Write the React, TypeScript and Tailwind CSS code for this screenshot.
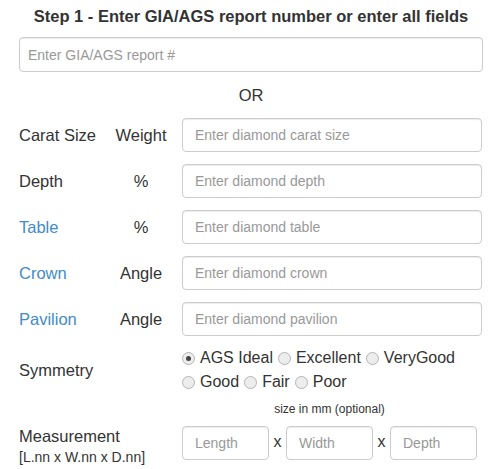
const rows = [
  { label: "Carat Size", unit: "Weight", placeholder: "Enter diamond carat size", link: false },
  { label: "Depth", unit: "%", placeholder: "Enter diamond depth", link: false },
  { label: "Table", unit: "%", placeholder: "Enter diamond table", link: true },
  { label: "Crown", unit: "Angle", placeholder: "Enter diamond crown", link: true },
  { label: "Pavilion", unit: "Angle", placeholder: "Enter diamond pavilion", link: true },
];

const Radio = ({ label, checked }: { label: string; checked?: boolean }) => (
  <label className="flex items-center gap-[5px] mr-[5px]">
    <span className="w-[13px] h-[13px] rounded-full border border-[#b4b4b4] bg-[#ededed] flex items-center justify-center">
      {checked && <span className="w-[5px] h-[5px] rounded-full bg-[#444]" />}
    </span>
    <span>{label}</span>
  </label>
);

const inputCls =
  "h-[34px] rounded-[4px] border border-[#ccc] text-[14px] text-[#555] placeholder:text-[#999] shadow-[inset_0_1px_1px_rgba(0,0,0,0.075)] outline-none";

const App = () => {
  return (
    <div className="w-[503px] h-[469px] bg-white text-[#333] font-['Liberation_Sans',Arial,sans-serif] text-[16.5px] pt-[6px] pl-[19px] pr-[20px]">
      <h1 className="font-bold text-[16.5px] text-center leading-[20px] text-[#333]">
        Step 1 - Enter GIA/AGS report number or enter all fields
      </h1>
      <input className={`${inputCls} w-full h-[35px] mt-[11px] px-[8px]`} placeholder="Enter GIA/AGS report #" />
      <div className="text-center leading-[20px] mt-[13px]">OR</div>

      <div className="flex flex-col gap-[12px] mt-[13px]">
        {rows.map((r) => (
          <div key={r.label} className="flex items-center">
            <span className={`w-[91px] ${r.link ? "text-[#428bca]" : ""}`}>{r.label}</span>
            <span className="w-[62px] text-center">{r.unit}</span>
            <input className={`${inputCls} px-[12px] ml-[10px] flex-1 mr-[1px]`} placeholder={r.placeholder} />
          </div>
        ))}
      </div>

      <div className="flex items-center mt-[10px] text-[16px]">
        <span className="w-[163px] text-[16.5px]">Symmetry</span>
        <div>
          <div className="flex h-[24px]">
            <Radio label="AGS Ideal" checked />
            <Radio label="Excellent" />
            <Radio label="VeryGood" />
          </div>
          <div className="flex h-[24px]">
            <Radio label="Good" />
            <Radio label="Fair" />
            <Radio label="Poor" />
          </div>
        </div>
      </div>

      <div className="flex mt-[7px]">
        <div className="w-[163px] pt-[24px]">
          <div className="leading-[22px]">Measurement</div>
          <div className="text-[14px] leading-[20px]">[L.nn x W.nn x D.nn]</div>
        </div>
        <div className="w-[295px]">
          <div className="text-[12px] text-center leading-[16px] mb-[9px]">size in mm (optional)</div>
          <div className="flex items-center">
            <input className={`${inputCls} px-[12px] w-[87px]`} placeholder="Length" />
            <span className="w-[17px] text-center text-[16px] pb-[3px]">x</span>
            <input className={`${inputCls} px-[12px] w-[87px]`} placeholder="Width" />
            <span className="w-[17px] text-center text-[16px] pb-[3px]">x</span>
            <input className={`${inputCls} px-[12px] w-[87px]`} placeholder="Depth" />
          </div>
        </div>
      </div>
    </div>
  );
};

export default App;
